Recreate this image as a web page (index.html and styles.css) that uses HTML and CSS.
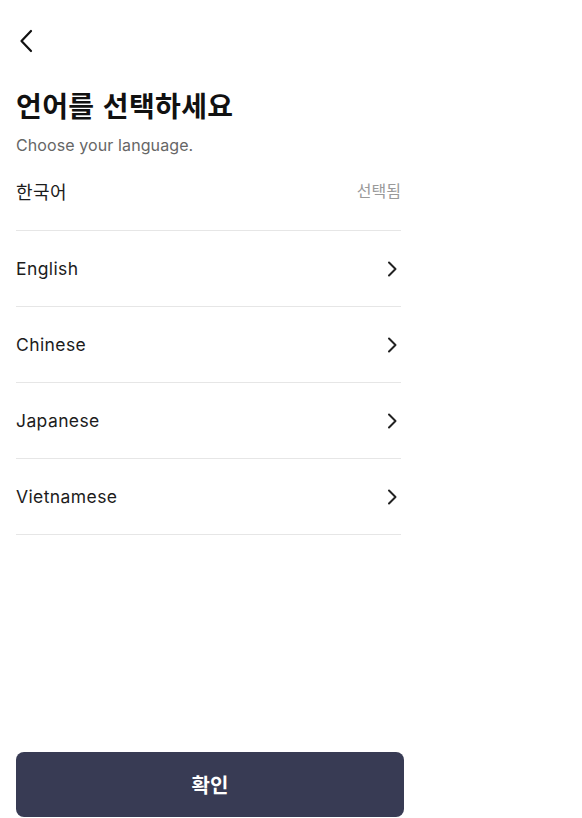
FILE: index.html
```html
<!DOCTYPE html>
<html lang="ko">
<head>
<meta charset="utf-8">
<link rel="stylesheet" href="styles.css">
</head>
<body>
<div class="page">
  <div class="top">
    <button class="back" aria-label="뒤로">
      <svg width="14" height="24" viewBox="0 0 14 24"><path d="M12 2 L2.5 12 L12 22" fill="none" stroke="#111" stroke-width="2.2" stroke-linecap="round" stroke-linejoin="round"/></svg>
    </button>
  </div>
  <h1 class="title">언어를 선택하세요</h1>
  <p class="subtitle">Choose your language.</p>
  <ul class="list">
    <li class="row"><span class="name">한국어</span><span class="selected">선택됨</span></li>
    <li class="row"><span class="name">English</span><svg class="chev" width="10" height="16" viewBox="0 0 10 16"><path d="M2 1.5 L8.5 8 L2 14.5" fill="none" stroke="#222" stroke-width="2" stroke-linecap="round" stroke-linejoin="round"/></svg></li>
    <li class="row"><span class="name">Chinese</span><svg class="chev" width="10" height="16" viewBox="0 0 10 16"><path d="M2 1.5 L8.5 8 L2 14.5" fill="none" stroke="#222" stroke-width="2" stroke-linecap="round" stroke-linejoin="round"/></svg></li>
    <li class="row"><span class="name">Japanese</span><svg class="chev" width="10" height="16" viewBox="0 0 10 16"><path d="M2 1.5 L8.5 8 L2 14.5" fill="none" stroke="#222" stroke-width="2" stroke-linecap="round" stroke-linejoin="round"/></svg></li>
    <li class="row"><span class="name">Vietnamese</span><svg class="chev" width="10" height="16" viewBox="0 0 10 16"><path d="M2 1.5 L8.5 8 L2 14.5" fill="none" stroke="#222" stroke-width="2" stroke-linecap="round" stroke-linejoin="round"/></svg></li>
  </ul>
  <button class="confirm">확인</button>
</div>
</body>
</html>
```
FILE: styles.css
```css
* { box-sizing: border-box; }
html, body { margin: 0; padding: 0; background: #fff; }
body { font-family: "Inter", "Noto Sans CJK KR", sans-serif; color: #111; }
.page {
  width: 420px;
  min-height: 818px;
  padding: 0 16px 1px;
  display: flex;
  flex-direction: column;
}
.top { padding-top: 29px; height: 55px; }
.back {
  border: 0; background: none; padding: 0 0 0 3px; margin: 0;
  display: block; height: 24px; cursor: pointer;
}
.title {
  margin: 32px 0 0;
  font-size: 28px;
  line-height: 36px;
  font-weight: 700;
  letter-spacing: 0.4px;
  font-family: "Noto Sans CJK KR", sans-serif;
}
.subtitle {
  margin: 11px 0 0;
  font-size: 16px;
  line-height: 22px;
  color: #666;
  letter-spacing: 0.1px;
}
.list { list-style: none; margin: -1px 0 0; padding: 0; width: 385px; }
.row {
  height: 76px;
  border-bottom: 1px solid #e6e6e6;
  display: flex;
  align-items: center;
  justify-content: space-between;
}
.name { font-size: 17.5px; color: #1c1c1c; letter-spacing: 0.4px; }
.row:first-child .name { font-family: "Noto Sans CJK KR", sans-serif; font-size: 18px; letter-spacing: 0.5px; }
.row:first-child { align-items: flex-start; padding-top: 23px; }
.selected { font-family: "Noto Sans CJK KR", sans-serif; font-size: 16px; color: #9a9a9a; }
.chev { margin-right: 4px; }
.confirm {
  margin-top: auto;
  width: 388px;
  height: 65px;
  border: 0;
  border-radius: 8px;
  background: #383b54;
  color: #fff;
  font-family: "Noto Sans CJK KR", sans-serif;
  font-size: 20px;
  font-weight: 700;
}
```
